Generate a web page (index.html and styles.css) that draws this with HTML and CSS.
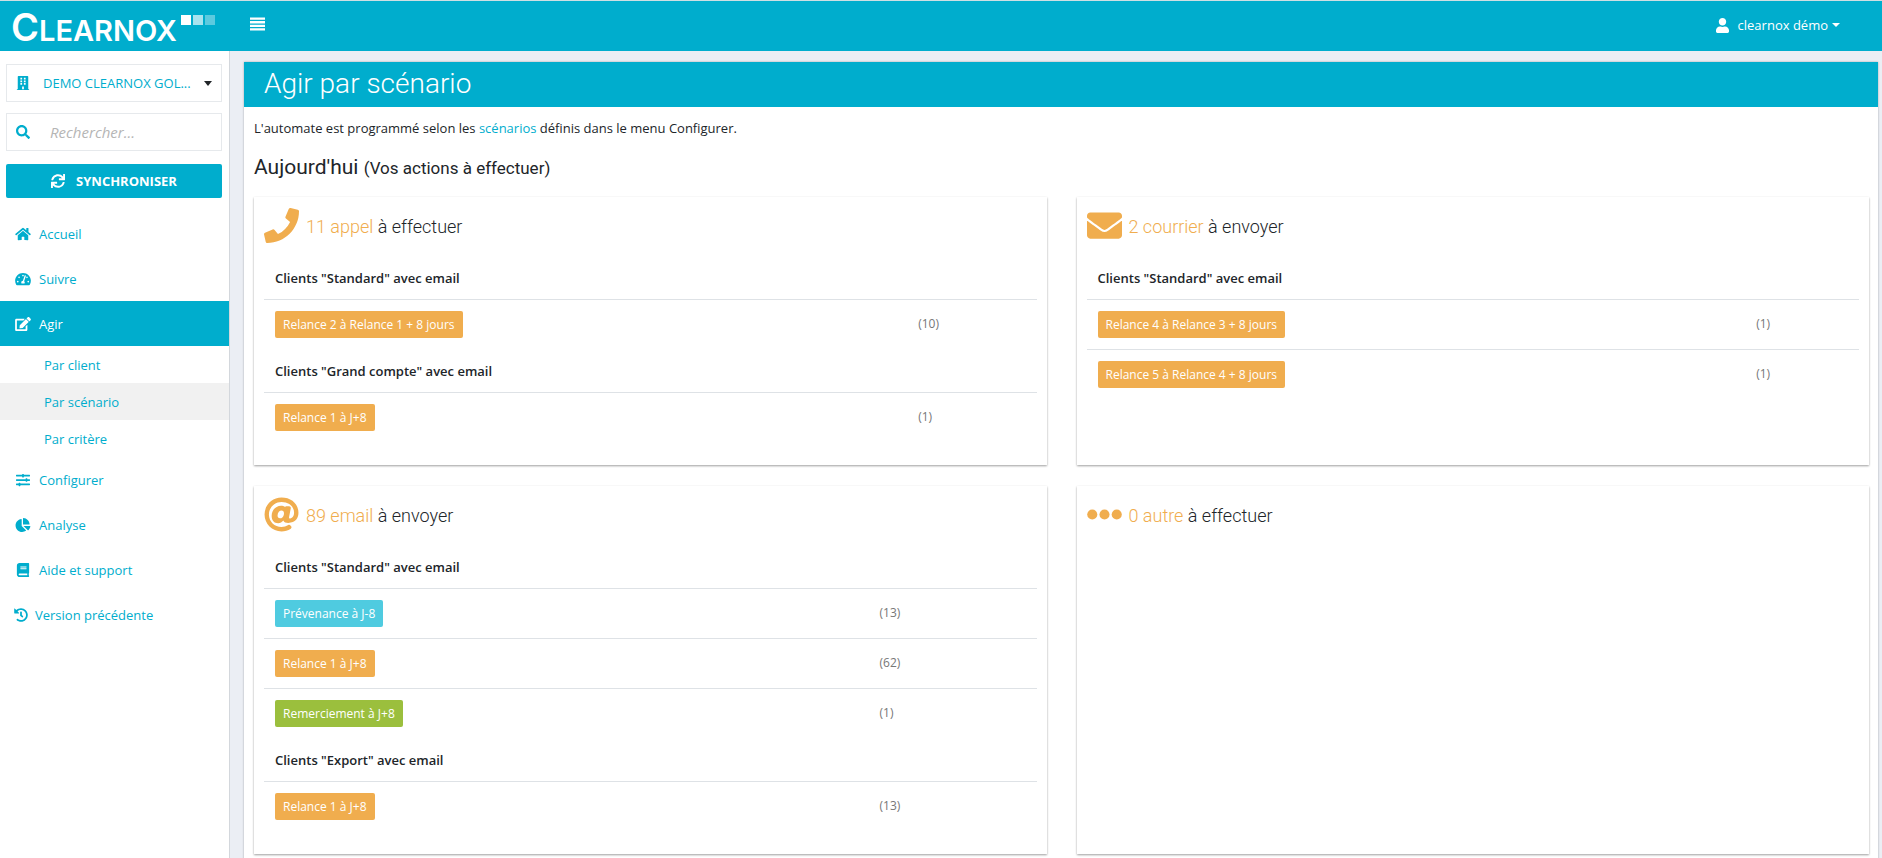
FILE: index.html
```html
<!DOCTYPE html>
<html lang="fr">
<head>
<meta charset="utf-8">
<title>Clearnox - Agir par scénario</title>
<meta name="viewport" content="width=device-width, initial-scale=1">
<link rel="stylesheet" href="styles.css">
</head>
<body>
<header class="topbar">
  <a class="logo" href="#" aria-label="Clearnox">
    <span class="logo-name"><span class="logo-initial">C</span>LEARNOX</span>
    <svg class="logo-squares" viewBox="0 0 34 10" aria-hidden="true"><path fill="#fff" d="M0 0h10v10H0z"/><path fill="#fff" opacity=".66" d="M12 0h10v10H12z"/><path fill="#fff" opacity=".36" d="M24 0h10v10H24z"/></svg>
  </a>
  <button class="menu-toggle" type="button" aria-label="Menu">
    <svg viewBox="0 0 15 14" aria-hidden="true"><path d="M0 .5h15v2.300H0zM0 4.100h15v2.300H0zM0 7.700h15v2.300H0zM0 11.300h15v2.300H0z"/></svg>
  </button>
  <button class="user-menu" type="button">
    <svg class="user-icon" viewBox="0 0 448 512" aria-hidden="true"><path d="M224 256c70.7 0 128-57.3 128-128S294.7 0 224 0 96 57.3 96 128s57.3 128 128 128zm89.600 32h-16.700c-22.200 10.200-46.900 16-72.900 16s-50.600-5.800-72.900-16h-16.700C60.200 288 0 348.200 0 422.400V464c0 26.500 21.500 48 48 48h352c26.500 0 48-21.500 48-48v-41.600c0-74.200-60.200-134.400-134.400-134.400z"/></svg>
    <span>clearnox démo</span>
    <svg class="user-caret" viewBox="0 0 8 4" aria-hidden="true"><path d="M0 0h8L4 4z"/></svg>
  </button>
</header>
<div class="layout">
  <aside class="sidebar">
    <div class="tools">
      <div class="field">
        <svg class="field-icon" viewBox="0 0 448 512" aria-hidden="true"><path fill-rule="evenodd" d="M436 480h-20V24c0-13-11-24-24-24H56C43 0 32 11 32 24v456H12c-7 0-12 5-12 12v20h448v-20c0-7-5-12-12-12zM128 64h64v64h-64zm128 0h64v64h-64zM128 160h64v64h-64zm128 0h64v64h-64zM128 256h64v64h-64zm128 0h64v64h-64zM192 384h64v96h-64z"/></svg>
        <select class="account" aria-label="Société"><option>DEMO CLEARNOX GOL...</option></select>
        <svg class="field-caret" viewBox="0 0 8 5" aria-hidden="true"><path d="M0 0h8L4 5z"/></svg>
      </div>
      <div class="field">
        <svg class="field-icon" viewBox="0 0 512 512" aria-hidden="true"><path d="M505 442.700L405.300 343c-4.500-4.500-10.600-7-17-7H372c27.600-35.300 44-79.700 44-128C416 93.100 322.900 0 208 0S0 93.100 0 208s93.100 208 208 208c48.300 0 92.700-16.400 128-44v16.300c0 6.400 2.500 12.500 7 17l99.700 99.700c9.400 9.400 24.600 9.400 33.900 0l28.300-28.300c9.400-9.400 9.400-24.600.1-34zM208 336c-70.700 0-128-57.200-128-128 0-70.700 57.200-128 128-128 70.700 0 128 57.200 128 128 0 70.700-57.200 128-128 128z"/></svg>
        <input class="search" type="search" placeholder="Rechercher..." aria-label="Rechercher">
      </div>
      <button class="sync" type="button">
        <svg viewBox="0 0 512 512" aria-hidden="true"><path d="M440.650 12.570l4 82.770A247.160 247.160 0 0 0 255.830 8C134.730 8 33.910 94.920 12.290 209.820A12 12 0 0 0 24.090 224h49.050a12 12 0 0 0 11.670-9.260 175.910 175.910 0 0 1 317-56.940l-101.460-4.860a12 12 0 0 0-12.570 12v47.410a12 12 0 0 0 12 12H500a12 12 0 0 0 12-12V12a12 12 0 0 0-12-12h-47.370a12 12 0 0 0-11.980 12.570zM255.830 432a175.610 175.610 0 0 1-146-77.800l101.800 4.870a12 12 0 0 0 12.570-12v-47.400a12 12 0 0 0-12-12H12a12 12 0 0 0-12 12V500a12 12 0 0 0 12 12h47.350a12 12 0 0 0 12-12.600l-4.150-82.570A247.170 247.170 0 0 0 255.830 504c121.110 0 221.930-86.920 243.550-201.820a12 12 0 0 0-11.800-14.180h-49.050a12 12 0 0 0-11.670 9.260A175.860 175.860 0 0 1 255.830 432z"/></svg>
        SYNCHRONISER
      </button>
    </div>
    <nav class="nav">
      <a class="nav-item" href="#"><svg viewBox="0 0 576 512" aria-hidden="true"><path d="M280.370 148.260L96 300.110V464a16 16 0 0 0 16 16l112.060-.29a16 16 0 0 0 15.920-16V368a16 16 0 0 1 16-16h64a16 16 0 0 1 16 16v95.640a16 16 0 0 0 16 16.050L464 480a16 16 0 0 0 16-16V300L295.670 148.260a12.190 12.190 0 0 0-15.300 0zM571.600 251.470L488 182.560V44.050a12 12 0 0 0-12-12h-56a12 12 0 0 0-12 12v72.610L318.470 43a48 48 0 0 0-61 0L4.340 251.470a12 12 0 0 0-1.600 16.900l25.500 31A12 12 0 0 0 45.150 301l235.220-193.740a12.190 12.190 0 0 1 15.300 0L530.900 301a12 12 0 0 0 16.900-1.600l25.500-31a12 12 0 0 0-1.700-16.930z"/></svg>Accueil</a>
      <a class="nav-item" href="#"><svg viewBox="0 0 576 512" aria-hidden="true"><path d="M288 32C128.940 32 0 160.940 0 320c0 52.800 14.250 102.260 39.060 144.800 5.610 9.620 16.300 15.200 27.440 15.200h443c11.140 0 21.830-5.580 27.440-15.200C561.750 422.260 576 372.800 576 320c0-159.060-128.940-288-288-288zm0 64c14.710 0 26.580 10.130 30.320 23.650-1.110 2.260-2.640 4.230-3.450 6.670l-9.220 27.670c-5.130 3.490-10.970 6.010-17.640 6.010-17.670 0-32-14.330-32-32S270.330 96 288 96zM96 384c-17.670 0-32-14.330-32-32s14.330-32 32-32 32 14.330 32 32-14.330 32-32 32zm48-160c-17.670 0-32-14.330-32-32s14.330-32 32-32 32 14.330 32 32-14.330 32-32 32zm246.770-72.410l-61.330 184C343.130 347.330 352 364.540 352 384c0 11.720-3.380 22.550-8.880 32H232.880c-5.500-9.450-8.880-20.280-8.880-32 0-33.940 26.500-61.430 59.900-63.590l61.340-184.010c4.170-12.560 17.730-19.450 30.360-15.170 12.570 4.190 19.350 17.790 15.170 30.360zm14.660 57.200l15.520-46.550c3.470-1.290 7.130-2.230 11.050-2.230 17.670 0 32 14.330 32 32s-14.330 32-32 32c-11.380-.01-20.890-6.280-26.570-15.220zM480 384c-17.670 0-32-14.330-32-32s14.330-32 32-32 32 14.330 32 32-14.330 32-32 32z"/></svg>Suivre</a>
      <a class="nav-item nav-item-active" href="#"><svg viewBox="0 0 576 512" aria-hidden="true"><path d="M402.600 83.200l90.200 90.200c3.800 3.800 3.800 10 0 13.800L274.400 405.600l-92.800 10.300c-12.400 1.400-22.900-9.100-21.500-21.500l10.300-92.800L388.800 83.200c3.800-3.800 10-3.800 13.800 0zm162-22.900l-48.800-48.800c-15.200-15.200-39.900-15.200-55.200 0l-35.400 35.400c-3.800 3.800-3.800 10 0 13.800l90.200 90.200c3.800 3.800 10 3.800 13.800 0l35.400-35.400c15.200-15.300 15.200-40 0-55.200zM384 346.200V448H64V128h229.800c3.200 0 6.200-1.300 8.500-3.500l40-40c7.600-7.600 2.200-20.500-8.500-20.500H48C21.500 64 0 85.500 0 112v352c0 26.500 21.500 48 48 48h352c26.500 0 48-21.500 48-48V306.200c0-10.700-12.900-16-20.500-8.500l-40 40c-2.200 2.300-3.500 5.300-3.500 8.500z"/></svg>Agir</a>
      <a class="nav-sub" href="#">Par client</a>
      <a class="nav-sub nav-sub-active" href="#">Par scénario</a>
      <a class="nav-sub" href="#">Par critère</a>
      <a class="nav-item" href="#"><svg viewBox="0 0 512 512" aria-hidden="true"><path d="M496 384H160v-16c0-8.800-7.200-16-16-16h-32c-8.800 0-16 7.200-16 16v16H16c-8.800 0-16 7.200-16 16v32c0 8.800 7.200 16 16 16h80v16c0 8.800 7.200 16 16 16h32c8.800 0 16-7.200 16-16v-16h336c8.800 0 16-7.200 16-16v-32c0-8.800-7.200-16-16-16zm0-160h-80v-16c0-8.800-7.200-16-16-16h-32c-8.800 0-16 7.200-16 16v16H16c-8.800 0-16 7.200-16 16v32c0 8.800 7.200 16 16 16h336v16c0 8.800 7.200 16 16 16h32c8.800 0 16-7.200 16-16v-16h80c8.800 0 16-7.200 16-16v-32c0-8.800-7.200-16-16-16zm0-160H288V48c0-8.800-7.200-16-16-16h-32c-8.800 0-16 7.200-16 16v16H16C7.200 64 0 71.200 0 80v32c0 8.800 7.200 16 16 16h208v16c0 8.800 7.200 16 16 16h32c8.800 0 16-7.200 16-16v-16h208c8.800 0 16-7.200 16-16V80c0-8.800-7.200-16-16-16z"/></svg>Configurer</a>
      <a class="nav-item" href="#"><svg viewBox="0 0 544 512" aria-hidden="true"><path d="M527.790 288H290.500l158.030 158.030c6.040 6.040 15.980 6.530 22.190.68 38.700-36.460 65.320-85.610 73.130-140.860 1.340-9.460-6.510-17.850-16.060-17.850zm-15.830-64.800C503.720 103.740 408.260 8.280 288.800.04 279.680-.59 272 7.100 272 16.240V240h223.770c9.140 0 16.820-7.680 16.190-16.800zM224 288V50.710c0-9.550-8.390-17.400-17.840-16.060C86.990 51.490-4.100 155.600.14 280.370 4.500 408.510 114.830 513.590 243.030 511.980c50.400-.63 96.970-16.870 135.260-44.030 7.900-5.600 8.420-17.230 1.570-24.080L224 288z"/></svg>Analyse</a>
      <a class="nav-item" href="#"><svg viewBox="0 0 448 512" aria-hidden="true"><path d="M448 360V24c0-13.300-10.700-24-24-24H96C43 0 0 43 0 96v320c0 53 43 96 96 96h328c13.300 0 24-10.700 24-24v-16c0-7.500-3.500-14.300-8.900-18.700-4.200-15.400-4.200-59.300 0-74.700 5.400-4.300 8.900-11.100 8.900-18.600zM128 134c0-3.300 2.700-6 6-6h212c3.300 0 6 2.700 6 6v20c0 3.300-2.700 6-6 6H134c-3.300 0-6-2.700-6-6v-20zm0 64c0-3.300 2.700-6 6-6h212c3.300 0 6 2.700 6 6v20c0 3.300-2.700 6-6 6H134c-3.300 0-6-2.700-6-6v-20zm253.400 250H96c-17.700 0-32-14.300-32-32 0-17.600 14.400-32 32-32h285.400c-1.900 17.100-1.900 46.900 0 64z"/></svg>Aide et support</a>
      <a class="nav-item nav-item-tight" href="#"><svg viewBox="0 0 512 512" aria-hidden="true"><path d="M504 255.531c.253 136.640-111.180 248.372-247.820 248.468-59.015.042-113.223-20.530-155.822-54.911-11.077-8.940-11.905-25.541-1.839-35.607l11.267-11.267c8.609-8.609 22.353-9.551 31.891-1.984C173.062 425.135 212.781 440 256 440c101.705 0 184-82.311 184-184 0-101.705-82.311-184-184-184-48.814 0-93.149 18.969-126.068 49.932l50.754 50.754c10.080 10.080 2.941 27.314-11.313 27.314H24c-8.837 0-16-7.163-16-16V38.627c0-14.254 17.234-21.393 27.314-11.314l49.372 49.372C129.209 34.136 189.552 8 256 8c136.810 0 247.747 110.780 248 247.531zm-180.912 78.784l9.823-12.630c8.138-10.463 6.253-25.542-4.210-33.679L288 256.349V152c0-13.255-10.745-24-24-24h-16c-13.255 0-24 10.745-24 24v135.651l65.409 50.874c10.463 8.137 25.541 6.253 33.679-4.210z"/></svg>Version précédente</a>
    </nav>
  </aside>
  <main class="main">
    <section class="panel">
      <h1 class="panel-title">Agir par scénario</h1>
      <div class="panel-body">
        <p class="intro">L'automate est programmé selon les <a href="#">scénarios</a> définis dans le menu Configurer.</p>
        <h2 class="day">Aujourd'hui <small>(Vos actions à effectuer)</small></h2>
        <div class="cards">
          <article class="card">
            <h3 class="card-title"><svg viewBox="0 0 512 512" aria-hidden="true"><path d="M493.400 24.600l-104-24c-11.300-2.600-22.900 3.300-27.500 13.900l-48 112c-4.200 9.800-1.400 21.300 6.900 28l60.600 49.600c-36 76.700-98.900 140.500-177.200 177.200l-49.600-60.600c-6.800-8.300-18.200-11.100-28-6.900l-112 48C3.900 366.500-2 378.100.6 389.400l24 104C27.100 504.200 36.700 512 48 512c256.100 0 464-207.500 464-464 0-11.200-7.700-20.900-18.600-23.400z"/></svg><span><em>11 appel</em> à effectuer</span></h3>
            <table class="steps">
              <colgroup><col class="col-call"><col></colgroup>
              <tbody>
                <tr><th colspan="2">Clients "Standard" avec email</th></tr>
                <tr><td><a class="tag" href="#">Relance 2 à Relance 1 + 8 jours</a></td><td class="count">(10)</td></tr>
              </tbody>
              <tbody>
                <tr><th colspan="2">Clients "Grand compte" avec email</th></tr>
                <tr><td><a class="tag" href="#">Relance 1 à J+8</a></td><td class="count">(1)</td></tr>
              </tbody>
            </table>
          </article>
          <article class="card">
            <h3 class="card-title"><svg viewBox="0 0 512 512" aria-hidden="true"><path d="M502.300 190.800c3.900-3.100 9.700-.2 9.700 4.700V400c0 26.500-21.500 48-48 48H48c-26.500 0-48-21.500-48-48V195.600c0-5 5.700-7.800 9.700-4.700 22.400 17.400 52.100 39.500 154.100 113.600 21.100 15.400 56.700 47.800 92.200 47.600 35.700.3 72-32.800 92.300-47.600 102-74.100 131.600-96.300 154-113.700zM256 320c23.200.4 56.600-29.200 73.400-41.400 132.700-96.300 142.800-104.700 173.400-128.700 5.800-4.500 9.200-11.500 9.200-18.900v-19c0-26.500-21.500-48-48-48H48c-26.500 0-48 21.500-48 48v19c0 7.400 3.400 14.300 9.200 18.900 30.600 23.900 40.700 32.400 173.400 128.700 16.800 12.200 50.200 41.800 73.400 41.400z"/></svg><span><em>2 courrier</em> à envoyer</span></h3>
            <table class="steps">
              <colgroup><col class="col-letter"><col></colgroup>
              <tbody>
                <tr><th colspan="2">Clients "Standard" avec email</th></tr>
                <tr><td><a class="tag" href="#">Relance 4 à Relance 3 + 8 jours</a></td><td class="count">(1)</td></tr>
                <tr><td><a class="tag" href="#">Relance 5 à Relance 4 + 8 jours</a></td><td class="count">(1)</td></tr>
              </tbody>
            </table>
          </article>
          <article class="card">
            <h3 class="card-title"><svg viewBox="0 0 512 512" aria-hidden="true"><path d="M256 8C118.941 8 8 118.919 8 256c0 137.059 110.919 248 248 248 48.154 0 95.342-14.140 135.408-40.223 12.005-7.815 14.625-24.288 5.552-35.372l-10.177-12.433c-7.671-9.371-21.179-11.667-31.373-5.129C325.920 429.757 291.314 440 256 440c-101.458 0-184-82.542-184-184S154.542 72 256 72c100.139 0 184 57.619 184 160 0 38.786-21.093 79.742-58.170 83.693-17.349-.454-16.910-12.857-13.476-30.024l23.433-121.110C394.653 149.750 383.308 136 368.225 136h-44.981a13.518 13.518 0 0 0-13.432 11.993l-.010.092c-14.697-17.901-40.448-21.775-59.971-21.775-74.580 0-137.831 62.234-137.831 151.460 0 65.303 36.785 105.870 96 105.870 26.984 0 57.369-15.637 74.991-38.333 9.522 34.104 40.613 34.104 70.710 34.104C462.609 379.410 504 307.798 504 232 504 95.653 394.023 8 256 8zm-21.680 304.430c-22.249 0-36.070-15.623-36.070-40.771 0-44.993 30.779-72.729 58.628-72.729 22.292 0 35.601 15.241 35.601 40.770 0 45.061-33.875 72.730-58.159 72.730z"/></svg><span><em>89 email</em> à envoyer</span></h3>
            <table class="steps">
              <colgroup><col class="col-email"><col></colgroup>
              <tbody>
                <tr><th colspan="2">Clients "Standard" avec email</th></tr>
                <tr><td><a class="tag tag-info" href="#">Prévenance à J-8</a></td><td class="count">(13)</td></tr>
                <tr><td><a class="tag" href="#">Relance 1 à J+8</a></td><td class="count">(62)</td></tr>
                <tr><td><a class="tag tag-thanks" href="#">Remerciement à J+8</a></td><td class="count">(1)</td></tr>
              </tbody>
              <tbody>
                <tr><th colspan="2">Clients "Export" avec email</th></tr>
                <tr><td><a class="tag" href="#">Relance 1 à J+8</a></td><td class="count">(13)</td></tr>
              </tbody>
            </table>
          </article>
          <article class="card">
            <h3 class="card-title"><svg viewBox="0 0 512 512" aria-hidden="true"><circle cx="77" cy="256" r="74"/><circle cx="256" cy="256" r="74"/><circle cx="435" cy="256" r="74"/></svg><span><em>0 autre</em> à effectuer</span></h3>
          </article>
        </div>
      </div>
    </section>
  </main>
</div>
</body>
</html>
```

FILE: styles.css
```css
:root {
  --brand: #00adcd;
  --warm: #f0ad4e;
  --ink: #212529;
  --ui: "Open Sans", "Noto Sans", sans-serif;
  --display: Roboto, sans-serif;
}

* { box-sizing: border-box; }

body {
  margin: 0;
  min-height: 100vh;
  display: flex;
  flex-direction: column;
  background: #ebeef4;
  color: var(--ink);
  font: 13px/20px var(--ui);
}

a { color: var(--brand); text-decoration: none; }
svg { display: block; fill: currentColor; flex: none; }
button { font: inherit; border: 0; cursor: pointer; }

/* Top bar */
.topbar {
  display: flex;
  height: 51px;
  border-top: 1px solid #cfdfe3;
  background: var(--brand);
  color: #fff;
}
.logo {
  display: flex;
  width: 229px;
  padding-left: 11px;
  color: #fff;
}
.logo-name { font: 600 29px/52px Inter, sans-serif; }
.logo-initial { font-size: 38px; }
.logo-squares { width: 34px; height: 10px; margin: 14px 0 0 4px; }
.menu-toggle { padding: 0 21px; background: none; color: #fff; height: 46px; }
.menu-toggle svg { width: 15px; height: 14px; }
.user-menu {
  display: flex;
  align-items: center;
  margin-left: auto;
  padding: 0 42px 2px 0;
  background: none;
  color: #fff;
}
.user-icon { width: 13px; height: 15px; margin-right: 9px; }
.user-caret { width: 8px; height: 4px; margin-left: 4px; }

/* Layout */
.layout { display: flex; flex: 1; }
.sidebar {
  flex: none;
  width: 230px;
  background: #fff;
  border-right: 1px solid #d3d7dc;
}
.main { flex: 1; min-width: 0; display: flex; padding: 11px 4px 0 14px; }

/* Sidebar */
.tools {
  display: flex;
  flex-direction: column;
  gap: 11px;
  padding: 13px 7px 13px 6px;
}
.field {
  display: flex;
  align-items: center;
  height: 38px;
  border: 1px solid #e6e9ec;
  padding: 0 9px;
}
.field-icon { width: 14px; height: 14px; color: var(--brand); }
.field-caret { width: 8px; height: 5px; color: var(--ink); }
.account {
  flex: 1;
  min-width: 0;
  appearance: none;
  border: 0;
  background: none;
  margin-left: 13px;
  padding: 0;
  color: var(--brand);
  font: 13px/20px var(--ui);
}
.search {
  flex: 1;
  min-width: 0;
  border: 0;
  padding: 0;
  margin-left: 20px;
  font: italic 15px/20px var(--ui);
}
.search::placeholder { color: #b5b5b5; opacity: 1; }
.sync {
  display: flex;
  align-items: center;
  justify-content: center;
  gap: 11px;
  height: 34px;
  margin-top: 2px;
  border-radius: 2px;
  background: var(--brand);
  color: #fff;
  font-weight: 700;
}
.sync svg { width: 14px; height: 14px; }
.nav { display: flex; flex-direction: column; }
.nav-item {
  display: flex;
  align-items: center;
  gap: 8px;
  height: 45px;
  padding-left: 15px;
}
.nav-item svg { width: 16px; height: 14px; }
.nav-item-tight { gap: 6px; padding-left: 13px; }
.nav-item-active { background: var(--brand); color: #fff; }
.nav-sub { padding: 9px 0 8px 44px; }
.nav-sub-active { background: #f1f1f1; }

/* Panel */
.panel { flex: 1; min-width: 0; background: #fff; box-shadow: 0 0 2px rgba(0, 0, 0, .3); }
.panel-title {
  margin: 0;
  padding: 0 0 2px 20px;
  background: var(--brand);
  color: #fff;
  font: 300 28px/43px var(--display);
}
.panel-body { padding: 11px 9px 6px 10px; }
.intro { margin: 0; }
.day { margin: 16px 0; font: 400 21px/26px var(--display); }
.day small { font-size: 17px; }

/* Cards */
.cards { display: grid; grid-template-columns: 1fr 1fr; gap: 21px 30px; }
.card {
  padding: 10px 10px 23px;
  box-shadow: 0 1px 2px rgba(0, 0, 0, .38);
}
.card-title {
  display: flex;
  align-items: center;
  gap: 7px;
  height: 36px;
  margin: 0 0 13px;
  font: 300 18px/24px var(--display);
}
.card-title svg { width: 35px; height: 35px; color: var(--warm); }
.card-title span { padding-top: 4px; }
.card-title em { font-style: normal; color: var(--warm); }
.steps { width: 100%; border-collapse: collapse; table-layout: fixed; }
.col-call { width: 83%; }
.col-letter { width: 85%; }
.col-email { width: 78%; }
.steps th { height: 43px; padding: 2px 11px 0; text-align: left; font-weight: 600; }
.steps td { height: 50px; padding: 0 11px; border-top: 1px solid #dee2e6; }
.steps .count { padding-left: 13px; color: #777; font-size: 12px; }
.tag {
  display: inline-block;
  padding: 4px 8px 3px;
  border-radius: 2px;
  background: var(--warm);
  color: #fff;
  font-size: 12px;
  vertical-align: middle;
}
.tag-info { background: #4fcbe0; }
.tag-thanks { background: #9bbf3d; }
```
